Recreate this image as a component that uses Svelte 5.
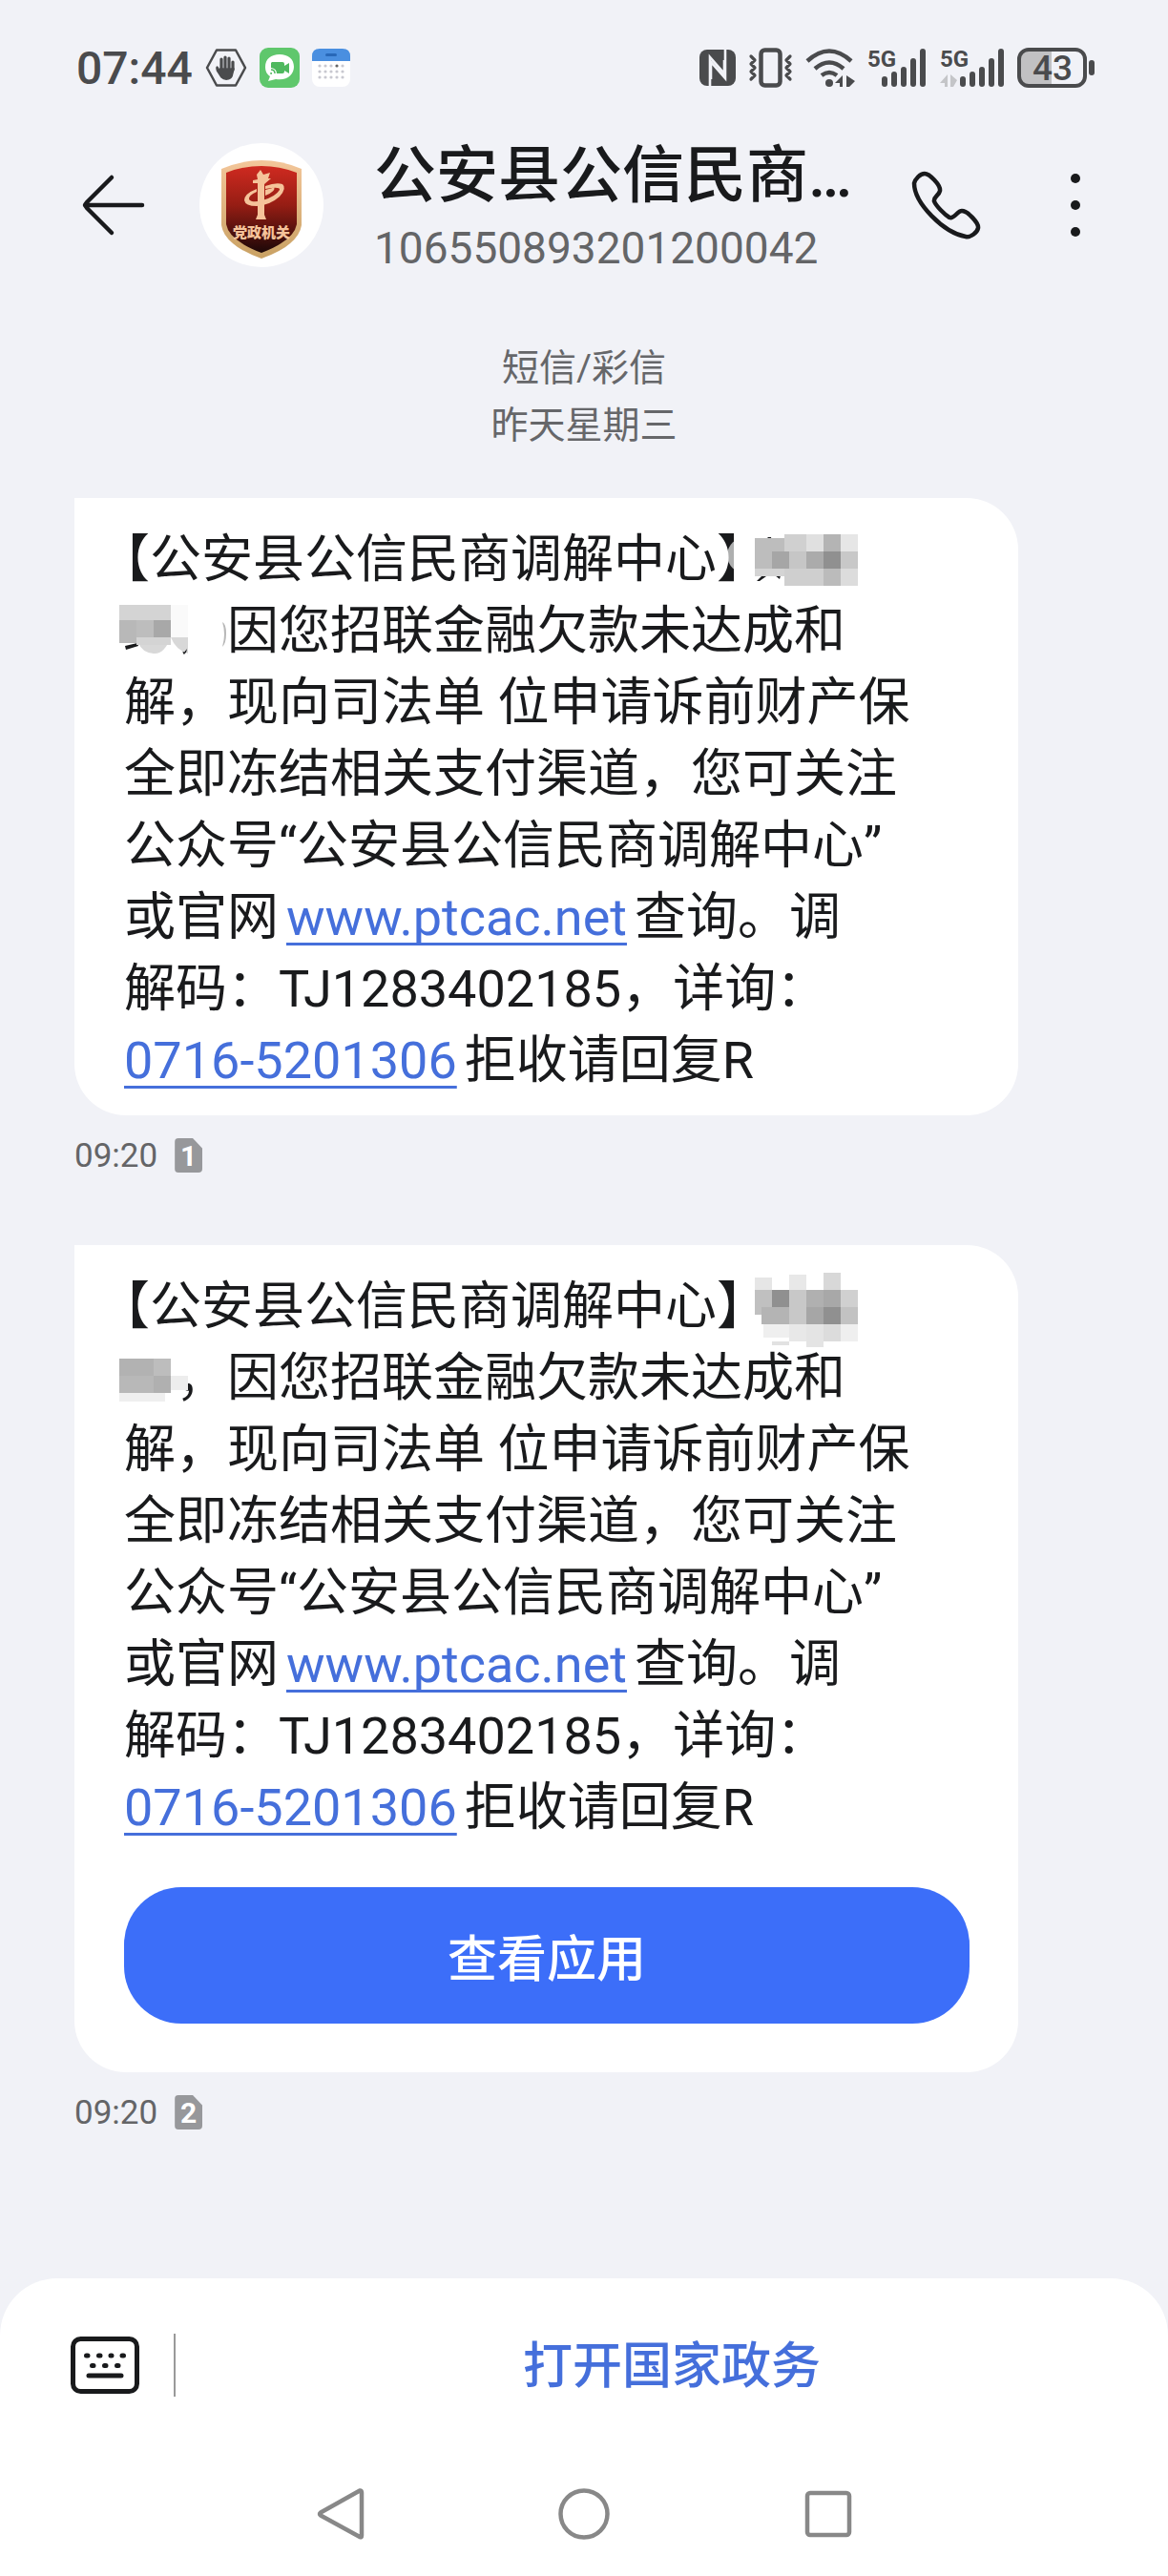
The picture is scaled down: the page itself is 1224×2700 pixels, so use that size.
<script>
  const messages = [
    {
      time: '09:20',
      sim: 1,
      action: null,
      // x, y, width, height, grey level of each block
      name: [
        [1, 15, 36, 39, '#bdbdbd'], [19, 29, 18, 18, '#a6a6a6'], [1, 47, 36, 8, '#d4d4d4'],
        [32, 11, 23, 18, '#d0d0d0'], [55, 11, 18, 18, '#e0e0e0'], [73, 11, 18, 18, '#b4b4b4'], [91, 11, 18, 18, '#e6e6e6'],
        [37, 29, 18, 18, '#c6c6c6'], [55, 29, 18, 18, '#ababab'], [73, 29, 18, 18, '#909090'], [91, 29, 18, 18, '#c8c8c8'],
        [32, 47, 41, 18, '#cfcfcf'], [73, 47, 18, 18, '#bbbbbb'], [91, 47, 18, 18, '#dcdcdc']
      ],
      nameEnd: [
        [-5, 10, 54, 16, '#d4d4d4'], [-5, 26, 18, 24, '#b8b8b8'], [13, 26, 18, 18, '#bdbdbd'],
        [31, 26, 18, 18, '#a8a8a8'], [49, 10, 18, 34, '#fafafa'], [13, 44, 36, 8, '#d4d4d4']
      ]
    },
    {
      time: '09:20',
      sim: 2,
      action: '查看应用',
      name: [
        [1, 7, 18, 13, '#e6e6e6'], [37, 4, 18, 16, '#e8e8e8'], [73, 2, 18, 18, '#d8d8d8'],
        [1, 20, 18, 26, '#c0c0c0'], [19, 20, 18, 18, '#909090'], [37, 20, 18, 36, '#c8c8c8'], [55, 20, 18, 18, '#b0b0b0'],
        [73, 20, 18, 18, '#a8a8a8'], [91, 20, 18, 18, '#d0d0d0'],
        [8, 38, 29, 18, '#b4b4b4'], [55, 38, 18, 18, '#a6a6a6'], [73, 38, 18, 18, '#909090'], [91, 38, 18, 18, '#c2c2c2'],
        [10, 56, 27, 14, '#efefef'], [37, 56, 18, 18, '#e8e8e8'], [55, 56, 18, 24, '#e4e4e4'], [73, 56, 18, 18, '#dcdcdc'],
        [91, 56, 18, 18, '#efefef'], [19, 74, 18, 4, '#e2e2e2']
      ],
      nameEnd: [
        [-5, 17, 36, 18, '#b2b2b2'], [31, 17, 18, 18, '#bdbdbd'],
        [-5, 35, 36, 18, '#b8b8b8'], [31, 35, 18, 18, '#b0b0b0'],
        [49, 35, 18, 15, '#ededed'], [-5, 53, 48, 9, '#efefef']
      ]
    }
  ]

  const bars = [[0, 29, 11], [10, 24, 16], [20, 19, 21], [30, 10, 30], [40, 0, 40]]
  const dots = [0, 1, 2, 3, 4]
</script>

<div class="phone">
  <div class="status">
    <div class="status-side">
      <span class="clock">07:44</span>
      <svg width="44" height="40" viewBox="0 0 44 40" fill="none" stroke="#4a4b4d" stroke-linecap="round" stroke-linejoin="round">
        <path d="M12 1.500H32L42 20 32 38.500H12L2 20Z" stroke-width="2.500" />
        <path d="M17 21V11M21 20V9M25 20V10M29 22V14" stroke-width="3.200" />
        <path d="M14 22C13 18 11 18 12.500 23L17 30C20 33 26 33 28 29L30 21H16Z" fill="#4a4b4d" stroke-width="1.500" />
      </svg>
      <svg width="42" height="42" viewBox="0 0 42 42">
        <rect width="42" height="42" rx="9" fill="#5fc76c" />
        <path d="M21 7C12 7 6 12 6 20 6 25 8 28 11 30L9 35 17 33C29 35 36 28 36 20 36 12 30 7 21 7Z" fill="#fff" />
        <path d="M13 15H24Q26 15 26 17V19L31 16V27L26 24V25Q26 27 24 27H18Q18 22 12 21V16Z" fill="#4fb95f" />
        <path d="M12 23Q16 23 16 27M12 26V27H13" fill="none" stroke="#4fb95f" stroke-width="1.500" />
      </svg>
      <svg width="40" height="40" viewBox="0 0 40 40">
        <rect width="40" height="40" rx="8" fill="#fff" />
        <path d="M0 13V8Q0 0 8 0H32Q40 0 40 8V13Z" fill="#4a8fe0" />
        <rect x="14" y="5" width="12" height="3" rx="1.500" fill="#2868b8" />
        {#each dots as d}
          <circle cx={8 + d * 6} cy="18" r="1.600" fill={d === 3 ? '#666' : '#c8c8d0'} />
          <circle cx={8 + d * 6} cy="24" r="1.600" fill="#c8c8d0" />
          <circle cx={8 + d * 6} cy="30" r="1.600" fill="#c8c8d0" />
        {/each}
      </svg>
    </div>
    <div class="status-side right">
      <svg width="38" height="38" viewBox="0 0 38 38">
        <rect width="38" height="38" rx="8" fill="#4a4b4d" />
        <path d="M11 38V8L26 25V11M12 12V31M27 0V30L12 13" fill="none" stroke="#f1f2f7" stroke-width="2.600" />
      </svg>
      <svg width="47" height="42" viewBox="0 0 47 42" fill="none" stroke="#4a4b4d" stroke-linecap="round" stroke-linejoin="round">
        <rect x="13.500" y="2.500" width="20" height="37" rx="4" stroke-width="4.500" />
        <path d="M3 9L7 13 3 17 7 21 3 25 7 29 3 33M44 9L40 13 44 17 40 21 44 25 40 29 44 33" stroke-width="3.200" />
      </svg>
      <svg width="52" height="41" viewBox="0 0 52 41" fill="none" stroke="#4a4b4d" stroke-width="4.500">
        <path d="M2 13Q25-8 48 13M10 21Q25 8 40 21M17 28Q25 22 33 28" />
        <circle cx="25" cy="36" r="4" fill="#4a4b4d" stroke="none" />
        <path d="M39 28V40H36V36H31ZM43 40V28L52 34 46 40Z" fill="#4a4b4d" stroke="none" />
      </svg>
      <svg class="signal" width="63" height="42" viewBox="0 0 63 42">
        <text x="0" y="20">5G</text>
        {#each bars as [x, y, h]}
          <rect x={15 + x} y={y + 1} width="6" height={h} rx="3" />
        {/each}
      </svg>
      <svg class="signal" width="68" height="42" viewBox="0 0 68 42">
        <text x="0" y="20">5G</text>
        <path d="M8 28V41H5V37H0ZM11 41V28L18 34 14 41Z" fill="#c4c5c8" />
        {#each bars as [x, y, h]}
          <rect x={21 + x} y={y + 1} width="6" height={h} rx="3" />
        {/each}
      </svg>
      <svg class="battery" width="82" height="42" viewBox="0 0 82 42">
        <path d="M36 3H12Q2 3 2 12V30Q2 39 12 39H36Z" fill="#c1c1c3" />
        <rect x="2" y="2" width="69" height="38" rx="10" fill="none" stroke="#4a4b4d" stroke-width="4" />
        <rect x="75" y="13" width="6" height="16" rx="3" fill="#4a4b4d" />
        <text x="37" y="34" text-anchor="middle">43</text>
      </svg>
    </div>
  </div>

  <header>
    <button class="icon back" aria-label="返回">
      <svg width="66" height="66" viewBox="0 0 66 66" fill="none" stroke="#191a1c" stroke-width="4.500" stroke-linecap="round" stroke-linejoin="round">
        <path d="M63 33H3M31 4L5 30Q2 33 5 36L31 62" />
      </svg>
    </button>
    <svg class="avatar" width="130" height="130" viewBox="0 0 130 130">
      <defs>
        <linearGradient id="shield" x2="0" y2="1">
          <stop offset="0" stop-color="#cf2a20" />
          <stop offset="0.450" stop-color="#961d14" />
          <stop offset="1" stop-color="#1c0808" />
        </linearGradient>
        <linearGradient id="gold" x2="0" y2="1">
          <stop offset="0" stop-color="#f3c69a" />
          <stop offset="1" stop-color="#c9a163" />
        </linearGradient>
      </defs>
      <circle cx="65" cy="65" r="65" fill="#fff" />
      <path d="M23 27Q44 18 65 18T107 27V86Q104 107 65 121 26 107 23 86Z" fill="url(#gold)" />
      <path d="M28 31Q46 24 65 24T102 31V85Q99 102 65 115 31 102 28 85Z" fill="url(#shield)" />
      <g fill="#f5c39a">
        <path d="M61 42H56V39L61 38 60 33 64 28 67 33 74 31 72 37 75 37 68 43V75L70 80H59L61 75Z" />
        <path d="M69 45Q80 41 87 43 92 47 84 56 74 65 60 66 48 66 47 60 47 53 60 48V51Q51 55 52 59 55 63 66 60 80 56 84 49 85 45 69 48Z" />
        <path d="M69 49Q78 47 78 46 81 50 69 55Z" />
        <text x="65" y="99" text-anchor="middle">党政机关</text>
      </g>
    </svg>
    <div class="contact">
      <h1>公安县公信民商…</h1>
      <p>106550893201200042</p>
    </div>
    <button class="icon call" aria-label="拨打电话">
      <svg width="80" height="80" viewBox="0 0 80 80" fill="none" stroke="#191a1c" stroke-width="4.500" stroke-linejoin="round">
        <path d="M18 7C23 7 35 19 34 25C33 30 27 31 28 36C30 41 39 50 44 53C49 55 52 46 57 46C63 46 75 59 74 64C73 69 66 74 61 73C38 69 7 38 7 17C8 13 13 7 18 7Z" />
      </svg>
    </button>
    <button class="icon more" aria-label="更多">
      <svg width="12" height="68" viewBox="0 0 12 68" fill="#191a1c">
        <circle cx="6" cy="6" r="5" />
        <circle cx="6" cy="34" r="5" />
        <circle cx="6" cy="62" r="5" />
      </svg>
    </button>
  </header>

  <main>
    <div class="day">短信/彩信<br />昨天星期三</div>

    {#each messages as message}
      <div class="bubble" class:with-action={message.action}>
        <p>
          <span class="half">【</span>公安县公信民商调解中心<span class="half">】</span><svg class="mosaic name" width="110" height="75">
            {#if message.sim === 1}
              <ellipse cx="-8" cy="33" rx="20" ry="19" fill="#fff" opacity="0.650" />
              <path d="M3 60L10 53 13 55 6 60ZM22 54L27 58 28 54ZM14 14L18 14 19 19Z" fill="#191a1c" />
            {/if}
            {#each message.name as [x, y, width, height, fill]}
              <rect {x} {y} {width} {height} {fill} />
            {/each}
          </svg><br />
          <svg class="mosaic" width="54" height="75">
            {#if message.sim === 1}
              <circle cx="80" cy="40" r="26" fill="#fff" />
              <path d="M103 28Q107 40 103 54Q107 50 107 40Q107 30 103 28Z" fill="#b8b8b8" />
              <path d="M-5 44H67V61Q54 57 49 44 42 62 31 61 19 60 15 50H-5Z" fill="#d8d8d8" />
              <path d="M1 53L14 50 15 53 2 57ZM62 61L66 56 65 60Z" fill="#191a1c" />
            {/if}
            {#each message.nameEnd as [x, y, width, height, fill]}
              <rect {x} {y} {width} {height} {fill} />
            {/each}
          </svg>，因您招联金融欠款未达成和<br />
          解，现向司法单 位申请诉前财产保<br />
          全即冻结相关支付渠道，您可关注<br />
          公众号“公安县公信民商调解中心”<br />
          或官网<a class="site" href="http://www.ptcac.net">www.ptcac.net</a>查询。调<br />
          解码：TJ1283402185，详询：<br />
          <a href="tel:0716-5201306">0716-5201306</a>拒收请回复R
        </p>
        {#if message.action}
          <button class="action">{message.action}</button>
        {/if}
      </div>
      <div class="meta">
        <span>{message.time}</span>
        <span class="sim">{message.sim}</span>
      </div>
    {/each}
  </main>

  <footer>
    <div class="composer">
      <button class="icon keyboard" aria-label="键盘">
        <svg width="72" height="60" viewBox="0 0 72 60" fill="none" stroke="#191a1c" stroke-width="5" stroke-linecap="round">
          <rect x="2.500" y="2.500" width="67" height="55" rx="8" />
          <path d="M16.500 20H18M29.500 20H31M42 20H43M54 20H55.500M22.500 30.500H24M35.500 30.500H37M48.500 30.500H50M19 41H53" />
        </svg>
      </button>
      <button class="menu">打开国家政务</button>
    </div>
    <nav>
      <button class="icon" aria-label="返回键">
        <svg width="54" height="54" viewBox="0 0 54 54" fill="none" stroke="#888" stroke-width="4.500" stroke-linejoin="round">
          <path d="M48 2.500Q50 2 50 4.500V49.500Q50 52 48 51L7 28.500Q5 27 7 25.500Z" />
        </svg>
      </button>
      <button class="icon" aria-label="主屏幕">
        <svg width="54" height="54" viewBox="0 0 54 54" fill="none" stroke="#888" stroke-width="4.500">
          <circle cx="27" cy="27" r="24.500" />
        </svg>
      </button>
      <button class="icon" aria-label="最近任务">
        <svg width="54" height="54" viewBox="0 0 54 54" fill="none" stroke="#888" stroke-width="4.500">
          <rect x="5" y="5" width="44" height="44" rx="3" />
        </svg>
      </button>
    </nav>
  </footer>
</div>

<style>
  :global(body) {
    margin: 0;
    background: #f1f2f7;
  }
  .phone {
    display: flex;
    flex-direction: column;
    min-height: 100vh;
    background: #f1f2f7;
    color: #191a1c;
    font-family: Roboto, 'Noto Sans CJK SC', sans-serif;
  }
  svg {
    display: block;
    flex: none;
    overflow: visible;
  }
  button {
    padding: 0;
    border: none;
    background: none;
    font-family: inherit;
    cursor: pointer;
  }
  h1,
  p {
    margin: 0;
  }

  .status {
    display: flex;
    justify-content: space-between;
    align-items: center;
    height: 142px;
    padding: 0 76px 0 80px;
  }
  .status-side {
    display: flex;
    align-items: center;
    gap: 13px;
  }
  .clock {
    color: #4a4b4d;
    font-size: 48px;
    font-weight: 500;
  }
  .signal {
    fill: #4a4b4d;
    font-size: 24px;
    font-weight: 700;
  }
  .battery {
    fill: #4a4b4d;
    font-size: 37px;
    font-weight: 500;
  }

  header {
    display: flex;
    align-items: center;
    height: 146px;
    padding: 0 91px 0 86px;
  }
  .avatar {
    margin-left: 57px;
  }
  .avatar text {
    font-size: 15px;
    font-weight: 900;
  }
  .contact {
    flex: 1;
    min-width: 0;
    margin-left: 53px;
    padding-top: 10px;
  }
  h1 {
    font-size: 65px;
    font-weight: 500;
    line-height: 80px;
    white-space: nowrap;
  }
  .contact p {
    color: #646567;
    font-size: 46px;
    line-height: 72px;
  }
  .call {
    margin-right: 90px;
  }

  .day {
    margin: 68px 0 46px;
    color: #66676a;
    font-size: 39px;
    line-height: 60px;
    text-align: center;
  }
  .bubble {
    margin: 0 157px 0 78px;
    padding: 27px 51px 20px 52px;
    border-radius: 0 54px 54px 54px;
    background: #fff;
  }
  .with-action {
    padding-bottom: 51px;
  }
  .bubble p {
    font-size: 54px;
    line-height: 75px;
    white-space: nowrap;
  }
  .half {
    font-feature-settings: 'halt';
  }
  .mosaic {
    display: inline-block;
    position: relative;
    vertical-align: top;
  }
  .name {
    margin-left: 12px;
  }
  a {
    margin-right: 8px;
    color: #456fdb;
    text-decoration-thickness: 3px;
    text-underline-offset: 8px;
    text-decoration-skip-ink: none;
  }
  .site {
    margin-left: 8px;
  }
  .action {
    display: block;
    width: 100%;
    height: 143px;
    margin-top: 46px;
    border-radius: 60px;
    background: #3c6ef9;
    color: #fff;
    font-size: 52px;
    font-weight: 500;
  }
  .meta {
    display: flex;
    align-items: center;
    gap: 18px;
    height: 44px;
    margin: 20px 78px 72px;
    color: #646567;
    font-size: 35px;
  }
  .sim {
    width: 29px;
    height: 36px;
    border-radius: 4px;
    background: #97989b;
    clip-path: polygon(0 0, 65% 0, 100% 30%, 100% 100%, 0 100%);
    color: #fff;
    font-size: 30px;
    font-weight: 700;
    line-height: 38px;
    text-align: center;
  }

  footer {
    margin-top: auto;
    border-radius: 60px 60px 0 0;
    background: #fff;
  }
  .composer {
    display: flex;
    align-items: center;
    height: 182px;
    padding-left: 74px;
  }
  .menu {
    flex: 1;
    height: 66px;
    margin-left: 36px;
    border-left: 2px solid #999;
    color: #456fdb;
    font-size: 52px;
    font-weight: 500;
    line-height: 70px;
  }
  nav {
    display: flex;
    justify-content: center;
    gap: 202px;
    height: 92px;
    padding-top: 38px;
  }
  nav .icon {
    height: 54px;
  }
</style>
